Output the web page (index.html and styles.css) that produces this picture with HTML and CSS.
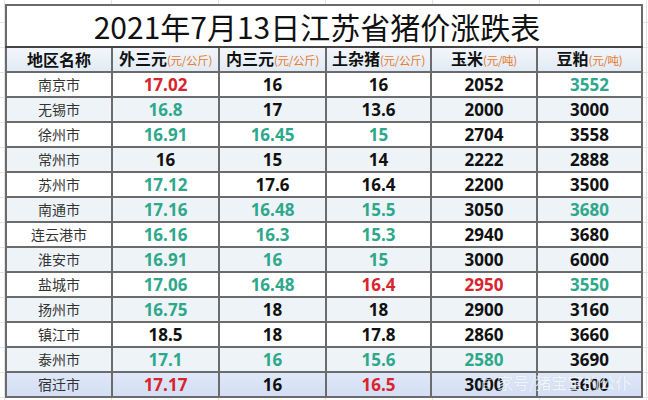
FILE: index.html
```html
<!DOCTYPE html>
<html lang="zh-CN">
<head>
<meta charset="utf-8">
<title>2021年7月13日江苏省猪价涨跌表</title>
<link rel="stylesheet" href="styles.css">
</head>
<body>
<div class="sheet">
  <table class="price">
    <colgroup>
      <col class="w106"><col class="w107"><col class="w107"><col class="w105"><col class="w106"><col class="w105">
    </colgroup>
    <tr class="title"><td colspan="6">2021年7月13日江苏省猪价涨跌表</td></tr>
    <tr class="head">
      <th>地区名称</th>
      <th>外三元<span class="unit">(元/公斤)</span></th>
      <th>内三元<span class="unit">(元/公斤)</span></th>
      <th>土杂猪<span class="unit">(元/公斤)</span></th>
      <th>玉米<span class="unit">(元/吨)</span></th>
      <th>豆粕<span class="unit">(元/吨)</span></th>
    </tr>
    <tr class="row w"><td class="city">南京市</td><td class="r">17.02</td><td>16</td><td>16</td><td>2052</td><td class="g">3552</td></tr>
    <tr class="row b"><td class="city">无锡市</td><td class="g">16.8</td><td>17</td><td>13.6</td><td>2000</td><td>3000</td></tr>
    <tr class="row w"><td class="city">徐州市</td><td class="g">16.91</td><td class="g">16.45</td><td class="g">15</td><td>2704</td><td>3558</td></tr>
    <tr class="row b"><td class="city">常州市</td><td>16</td><td>15</td><td>14</td><td>2222</td><td>2888</td></tr>
    <tr class="row w"><td class="city">苏州市</td><td class="g">17.12</td><td>17.6</td><td>16.4</td><td>2200</td><td>3500</td></tr>
    <tr class="row b"><td class="city">南通市</td><td class="g">17.16</td><td class="g">16.48</td><td class="g">15.5</td><td>3050</td><td class="g">3680</td></tr>
    <tr class="row w"><td class="city">连云港市</td><td class="g">16.16</td><td class="g">16.3</td><td class="g">15.3</td><td>2940</td><td>3680</td></tr>
    <tr class="row b"><td class="city">淮安市</td><td class="g">16.91</td><td class="g">16</td><td class="g">15</td><td>3000</td><td>6000</td></tr>
    <tr class="row w"><td class="city">盐城市</td><td class="g">17.06</td><td class="g">16.48</td><td class="r">16.4</td><td class="r">2950</td><td class="g">3550</td></tr>
    <tr class="row b"><td class="city">扬州市</td><td class="g">16.75</td><td>18</td><td>18</td><td>2900</td><td>3160</td></tr>
    <tr class="row w"><td class="city">镇江市</td><td>18.5</td><td>18</td><td>17.8</td><td>2860</td><td>3660</td></tr>
    <tr class="row b"><td class="city">泰州市</td><td class="g">17.1</td><td class="g">16</td><td class="g">15.6</td><td class="g">2580</td><td>3690</td></tr>
    <tr class="row sel"><td class="city">宿迁市</td><td class="r">17.17</td><td>16</td><td class="r">16.5</td><td>3000</td><td>3600</td></tr>
  </table>
  <div class="mark"><span class="dot">百</span>家号/猪宝宝的公仆</div>
</div>
</body>
</html>
```

FILE: styles.css
```css
html, body {
  margin: 0;
  padding: 0;
}
body {
  width: 648px;
  height: 400px;
  overflow: hidden;
  background-color: #fff;
  background-image:
    linear-gradient(#e3e3e3 1px, transparent 1px),
    linear-gradient(90deg, #e3e3e3 1px, transparent 1px);
  background-size: 107px 25px;
  background-position: 4px 22px;
  font-family: "Noto Sans CJK SC", sans-serif;
}
.sheet {
  position: relative;
  padding: 4px 0 0 5px;
}
.price {
  border-collapse: collapse;
  table-layout: fixed;
  width: 636px;
  border: 2px solid #1c1c1c;
  background: #fff;
}
.w105 { width: 105px; }
.w106 { width: 106px; }
.w107 { width: 107px; }
.price td, .price th {
  border: 2px solid #6b6b6b;
  padding: 0;
  text-align: center;
  white-space: nowrap;
  overflow: hidden;
}
.title td {
  height: 40px;
  font-size: 30px;
  font-weight: 400;
  color: #111;
  padding-right: 14px;
  line-height: 40px;
  border-bottom-color: #444;
}
.head th {
  height: 21px;
  font-size: 16px;
  font-weight: 700;
  color: #111;
  line-height: 21px;
  background: linear-gradient(#f2f6fb, #e1eaf4);
}
.unit {
  font-size: 11.5px;
  font-weight: 400;
  color: #e7782a;
  letter-spacing: -0.3px;
}
.row td {
  height: 23px;
  line-height: 23px;
  font-family: "Open Sans", "Noto Sans CJK SC", sans-serif;
  font-size: 17px;
  font-weight: 700;
  color: #111;
}
.row td.city {
  font-family: "Noto Sans CJK SC", sans-serif;
  font-size: 14px;
  font-weight: 400;
  color: #333;
}
.row.b { background: #eef3f8; }
.row.w { background: #fff; }
.row.sel { background: linear-gradient(#e0e8f8, #d3def4); }
.row td.g { color: #2ea88a; }
.row td.r { color: #d8242c; }
.mark {
  position: absolute;
  left: 480px;
  top: 371px;
  font-size: 16px;
  line-height: 22px;
  color: rgba(255, 255, 255, 0.78);
  text-shadow: 0 0 1px rgba(120, 140, 170, 0.25);
  white-space: nowrap;
}
.dot {
  display: inline-block;
  font-size: 12px;
  margin-right: 5px;
  opacity: 0.7;
}
```
